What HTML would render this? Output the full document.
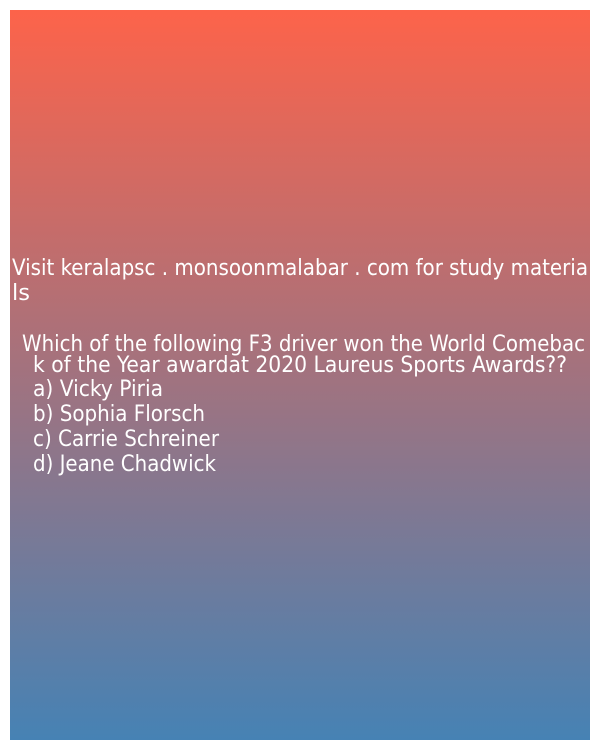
<!DOCTYPE html>
<html><head><style>
html,body{margin:0;padding:0;background:#fff;width:600px;height:750px;overflow:hidden}
.bg{position:absolute;left:10px;top:10px;width:580px;height:730px;background:linear-gradient(#fd634a,#4682b4)}
svg{position:absolute;left:0;top:0}
text{font-family:"DejaVu Sans Condensed","DejaVu Sans","Liberation Sans",sans-serif;font-size:22px;fill:#fff}
</style></head><body>
<div class="bg"></div>
<svg width="600" height="750">
<text x="12" y="275" textLength="576" lengthAdjust="spacingAndGlyphs">Visit keralapsc . monsoonmalabar . com for study materia</text>
<text x="12" y="300" textLength="18" lengthAdjust="spacingAndGlyphs">ls</text>
<text x="22" y="351" textLength="563" lengthAdjust="spacingAndGlyphs">Which of the following F3 driver won the World Comebac</text>
<text x="33" y="372" textLength="534" lengthAdjust="spacingAndGlyphs">k of the Year awardat 2020 Laureus Sports Awards??</text>
<text x="33" y="396" textLength="130" lengthAdjust="spacingAndGlyphs">a) Vicky Piria</text>
<text x="33" y="421" textLength="172" lengthAdjust="spacingAndGlyphs">b) Sophia Florsch</text>
<text x="33" y="446" textLength="186" lengthAdjust="spacingAndGlyphs">c) Carrie Schreiner</text>
<text x="33" y="471" textLength="183" lengthAdjust="spacingAndGlyphs">d) Jeane Chadwick</text>
</svg>
</body></html>
